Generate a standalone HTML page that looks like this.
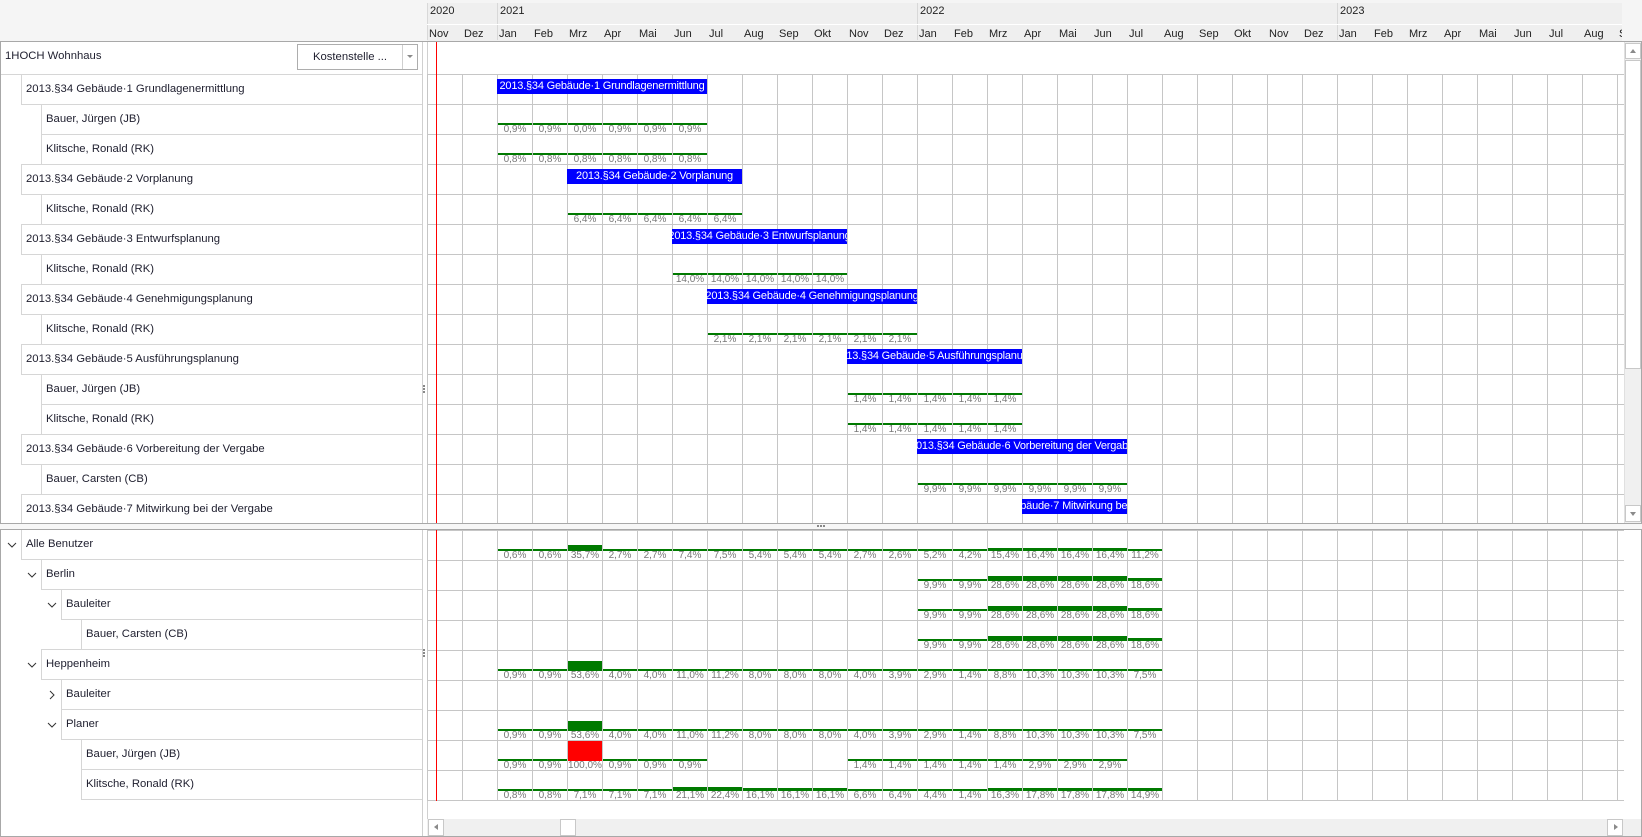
<!DOCTYPE html>
<html><head><meta charset="utf-8">
<style>
*{margin:0;padding:0;box-sizing:border-box}
body{width:1642px;height:837px;background:#fff;position:relative;overflow:hidden;font-family:"Liberation Sans",sans-serif;color:#1e1e2e}
.a{position:absolute}
.hdr{left:0;top:0;width:1642px;height:41px;background:#f5f5f5}
.hchart{left:427px;top:3px;width:1195px;height:38px;background:#efefef;overflow:hidden}
.yr{position:absolute;top:0;height:37px;border-left:1px solid #d8d8d8;font-size:11px;padding:2px 0 0 2px;color:#222}
.mrow{position:absolute;left:0;top:21px;height:16px;border-top:1px solid #fff;display:flex;width:1300px}
.mrow span{width:35px;flex:none;font-size:11px;padding:3px 0 0 2px;color:#222}
.panel{border:1px solid #a8a8a8}
.grid{background-image:repeating-linear-gradient(to right,#c6c6c6 0 1px,transparent 1px 35px),repeating-linear-gradient(to bottom,#c6c6c6 0 1px,transparent 1px 30px)}
.t{position:absolute;height:31px;border-top:1px solid #d6d6d6;border-bottom:1px solid #d6d6d6;border-left:1px solid #d6d6d6;font-size:11.3px;line-height:29px;padding-left:4px;white-space:nowrap;color:#1e1e2e}
.chev{position:absolute;width:10px;height:10px}
.bar{position:absolute;height:15px;background:#0000ff;color:#fff;font-size:11px;letter-spacing:-0.2px;line-height:15px;white-space:nowrap;overflow:hidden;display:flex;justify-content:center}
.bar span{flex:none}
.r{position:absolute;display:flex;height:29px;align-items:flex-end}
.r s{text-decoration:none;display:block;flex:none;box-sizing:content-box;width:34px;margin-right:1px;border-top:2px solid #007a00;height:9px;line-height:9px;font-size:10px;color:#777;text-align:center}
.r s.red{border-top:20px solid #ff0000}
.red-line{position:absolute;left:436px;width:1px;background:#ff0000}
</style></head><body>
<div class="a hdr"></div>
<div class="a hchart">
 <div class="yr" style="left:0;width:70px">2020</div>
 <div class="yr" style="left:70px;width:420px">2021</div>
 <div class="yr" style="left:490px;width:420px">2022</div>
 <div class="yr" style="left:910px;width:420px">2023</div>
 <div class="mrow"><span>Nov</span><span>Dez</span><span>Jan</span><span>Feb</span><span>Mrz</span><span>Apr</span><span>Mai</span><span>Jun</span><span>Jul</span><span>Aug</span><span>Sep</span><span>Okt</span><span>Nov</span><span>Dez</span><span>Jan</span><span>Feb</span><span>Mrz</span><span>Apr</span><span>Mai</span><span>Jun</span><span>Jul</span><span>Aug</span><span>Sep</span><span>Okt</span><span>Nov</span><span>Dez</span><span>Jan</span><span>Feb</span><span>Mrz</span><span>Apr</span><span>Mai</span><span>Jun</span><span>Jul</span><span>Aug</span><span>S</span></div>
</div>

<div class="a panel" style="left:0;top:41px;width:1642px;height:483px;overflow:hidden">
 <div class="a" style="left:0;top:0;width:421px;height:481px;overflow:hidden">
  <div class="t" style="left:-1px;top:-1px;width:422px;height:34px;border-left:none;border-top:none;line-height:30px;padding-left:5px">1HOCH Wohnhaus</div>
  <div class="a" style="left:296px;top:2px;width:121px;height:26px;border:1px solid #adadad;background:#fff;font-size:11.3px;line-height:24px">
   <span style="position:absolute;left:0;width:104px;text-align:center">Kostenstelle ...</span>
   <span style="position:absolute;left:104px;top:0;width:1px;height:24px;background:#cfcfcf"></span>
   <span style="position:absolute;left:109px;top:10px;border-left:3px solid transparent;border-right:3px solid transparent;border-top:3px solid #8a8a8a"></span>
  </div>
  <div class="t" style="left:20px;top:32px;width:402px">2013.§34 Gebäude·1 Grundlagenermittlung</div>
  <div class="t" style="left:40px;top:62px;width:382px">Bauer, Jürgen (JB)</div>
  <div class="t" style="left:40px;top:92px;width:382px">Klitsche, Ronald (RK)</div>
  <div class="t" style="left:20px;top:122px;width:402px">2013.§34 Gebäude·2 Vorplanung</div>
  <div class="t" style="left:40px;top:152px;width:382px">Klitsche, Ronald (RK)</div>
  <div class="t" style="left:20px;top:182px;width:402px">2013.§34 Gebäude·3 Entwurfsplanung</div>
  <div class="t" style="left:40px;top:212px;width:382px">Klitsche, Ronald (RK)</div>
  <div class="t" style="left:20px;top:242px;width:402px">2013.§34 Gebäude·4 Genehmigungsplanung</div>
  <div class="t" style="left:40px;top:272px;width:382px">Klitsche, Ronald (RK)</div>
  <div class="t" style="left:20px;top:302px;width:402px">2013.§34 Gebäude·5 Ausführungsplanung</div>
  <div class="t" style="left:40px;top:332px;width:382px">Bauer, Jürgen (JB)</div>
  <div class="t" style="left:40px;top:362px;width:382px">Klitsche, Ronald (RK)</div>
  <div class="t" style="left:20px;top:392px;width:402px">2013.§34 Gebäude·6 Vorbereitung der Vergabe</div>
  <div class="t" style="left:40px;top:422px;width:382px">Bauer, Carsten (CB)</div>
  <div class="t" style="left:20px;top:452px;width:402px">2013.§34 Gebäude·7 Mitwirkung bei der Vergabe</div>
 </div>
 <div class="a" style="left:421px;top:0;width:1px;height:481px;background:#d0d0d0"></div>
 <div class="a" style="left:422px;top:343px;width:2px;height:2px;background:#888;box-shadow:0 3px 0 #888,0 6px 0 #888"></div>
 <div class="a" style="left:426px;top:0;width:1px;height:481px;background:#d0d0d0"></div>
 <div class="a grid" style="left:426px;top:32px;width:1197px;height:460px"></div>
 <div class="red-line" style="left:435px;top:0;height:481px"></div>
 <div class="bar" style="left:496px;top:37px;width:210px"><span>2013.§34 Gebäude·1 Grundlagenermittlung</span></div>
 <div class="r" style="left:497px;top:63px"><s>0,9%</s><s>0,9%</s><s>0,0%</s><s>0,9%</s><s>0,9%</s><s>0,9%</s></div>
 <div class="r" style="left:497px;top:93px"><s>0,8%</s><s>0,8%</s><s>0,8%</s><s>0,8%</s><s>0,8%</s><s>0,8%</s></div>
 <div class="bar" style="left:566px;top:127px;width:175px"><span>2013.§34 Gebäude·2 Vorplanung</span></div>
 <div class="r" style="left:567px;top:153px"><s>6,4%</s><s>6,4%</s><s>6,4%</s><s>6,4%</s><s>6,4%</s></div>
 <div class="bar" style="left:671px;top:187px;width:175px"><span>2013.§34 Gebäude·3 Entwurfsplanung</span></div>
 <div class="r" style="left:672px;top:213px"><s>14,0%</s><s>14,0%</s><s>14,0%</s><s>14,0%</s><s>14,0%</s></div>
 <div class="bar" style="left:706px;top:247px;width:210px"><span>2013.§34 Gebäude·4 Genehmigungsplanung</span></div>
 <div class="r" style="left:707px;top:273px"><s>2,1%</s><s>2,1%</s><s>2,1%</s><s>2,1%</s><s>2,1%</s><s>2,1%</s></div>
 <div class="bar" style="left:846px;top:307px;width:175px"><span>2013.§34 Gebäude·5 Ausführungsplanung</span></div>
 <div class="r" style="left:847px;top:333px"><s>1,4%</s><s>1,4%</s><s>1,4%</s><s>1,4%</s><s>1,4%</s></div>
 <div class="r" style="left:847px;top:363px"><s>1,4%</s><s>1,4%</s><s>1,4%</s><s>1,4%</s><s>1,4%</s></div>
 <div class="bar" style="left:916px;top:397px;width:210px"><span>2013.§34 Gebäude·6 Vorbereitung der Vergabe</span></div>
 <div class="r" style="left:917px;top:423px"><s>9,9%</s><s>9,9%</s><s>9,9%</s><s>9,9%</s><s>9,9%</s><s>9,9%</s></div>
 <div class="bar" style="left:1021px;top:457px;width:105px"><span>2013.§34 Gebäude·7 Mitwirkung bei der Vergabe</span></div>
 <div class="a" style="left:1623px;top:0;width:17px;height:481px;background:#f0f0f0;border-left:1px solid #e0e0e0"></div>
 <div class="a" style="left:1624px;top:1px;width:16px;height:16px;background:#fff;border:1px solid #c8c8c8"><span style="position:absolute;left:4px;top:5px;border-left:3px solid transparent;border-right:3px solid transparent;border-bottom:4px solid #8a8a8a"></span></div>
 <div class="a" style="left:1624px;top:18px;width:16px;height:309px;background:#fff;border:1px solid #c8c8c8"></div>
 <div class="a" style="left:1624px;top:463px;width:16px;height:17px;background:#fff;border:1px solid #c8c8c8"><span style="position:absolute;left:4px;top:6px;border-left:3px solid transparent;border-right:3px solid transparent;border-top:4px solid #8a8a8a"></span></div>
</div>

<div class="a" style="left:0;top:524px;width:1642px;height:6px;background:#f7f7f7"></div>
<div class="a" style="left:817px;top:525px;width:2px;height:2px;background:#888;box-shadow:3px 0 0 #888,6px 0 0 #888"></div>

<div class="a panel" style="left:0;top:529px;width:1642px;height:308px;overflow:hidden">
 <div class="a" style="left:0;top:0;width:421px;height:306px;overflow:hidden">
  <svg class="chev" style="left:6px;top:10px" viewBox="0 0 10 10"><polyline points="1,3 5,7 9,3" fill="none" stroke="#333" stroke-width="1"/></svg>
  <div class="t" style="left:20px;top:-1px;width:402px">Alle Benutzer</div>
  <svg class="chev" style="left:26px;top:40px" viewBox="0 0 10 10"><polyline points="1,3 5,7 9,3" fill="none" stroke="#333" stroke-width="1"/></svg>
  <div class="t" style="left:40px;top:29px;width:382px">Berlin</div>
  <svg class="chev" style="left:46px;top:70px" viewBox="0 0 10 10"><polyline points="1,3 5,7 9,3" fill="none" stroke="#333" stroke-width="1"/></svg>
  <div class="t" style="left:60px;top:59px;width:362px">Bauleiter</div>
  <div class="t" style="left:80px;top:89px;width:342px">Bauer, Carsten (CB)</div>
  <svg class="chev" style="left:26px;top:130px" viewBox="0 0 10 10"><polyline points="1,3 5,7 9,3" fill="none" stroke="#333" stroke-width="1"/></svg>
  <div class="t" style="left:40px;top:119px;width:382px">Heppenheim</div>
  <svg class="chev" style="left:46px;top:160px" viewBox="0 0 10 10"><polyline points="3,1 7,5 3,9" fill="none" stroke="#333" stroke-width="1"/></svg>
  <div class="t" style="left:60px;top:149px;width:362px">Bauleiter</div>
  <svg class="chev" style="left:46px;top:190px" viewBox="0 0 10 10"><polyline points="1,3 5,7 9,3" fill="none" stroke="#333" stroke-width="1"/></svg>
  <div class="t" style="left:60px;top:179px;width:362px">Planer</div>
  <div class="t" style="left:80px;top:209px;width:342px">Bauer, Jürgen (JB)</div>
  <div class="t" style="left:80px;top:239px;width:342px">Klitsche, Ronald (RK)</div>
 </div>
 <div class="a" style="left:421px;top:0;width:1px;height:306px;background:#d0d0d0"></div>
 <div class="a" style="left:422px;top:119px;width:2px;height:2px;background:#888;box-shadow:0 3px 0 #888,0 6px 0 #888"></div>
 <div class="a" style="left:426px;top:0;width:1px;height:306px;background:#d0d0d0"></div>
 <div class="a grid" style="left:426px;top:0;width:1197px;height:271px"></div>
 <div class="red-line" style="left:435px;top:0;height:271px"></div>
 <div class="r" style="left:497px;top:1px"><s>0,6%</s><s>0,6%</s><s style="border-top-width:6px">35,7%</s><s>2,7%</s><s>2,7%</s><s>7,4%</s><s>7,5%</s><s>5,4%</s><s>5,4%</s><s>5,4%</s><s>2,7%</s><s>2,6%</s><s>5,2%</s><s>4,2%</s><s style="border-top-width:3px">15,4%</s><s style="border-top-width:3px">16,4%</s><s style="border-top-width:3px">16,4%</s><s style="border-top-width:3px">16,4%</s><s>11,2%</s></div>
 <div class="r" style="left:917px;top:31px"><s>9,9%</s><s>9,9%</s><s style="border-top-width:5px">28,6%</s><s style="border-top-width:5px">28,6%</s><s style="border-top-width:5px">28,6%</s><s style="border-top-width:5px">28,6%</s><s style="border-top-width:3px">18,6%</s></div>
 <div class="r" style="left:917px;top:61px"><s>9,9%</s><s>9,9%</s><s style="border-top-width:5px">28,6%</s><s style="border-top-width:5px">28,6%</s><s style="border-top-width:5px">28,6%</s><s style="border-top-width:5px">28,6%</s><s style="border-top-width:3px">18,6%</s></div>
 <div class="r" style="left:917px;top:91px"><s>9,9%</s><s>9,9%</s><s style="border-top-width:5px">28,6%</s><s style="border-top-width:5px">28,6%</s><s style="border-top-width:5px">28,6%</s><s style="border-top-width:5px">28,6%</s><s style="border-top-width:3px">18,6%</s></div>
 <div class="r" style="left:497px;top:121px"><s>0,9%</s><s>0,9%</s><s style="border-top-width:10px">53,6%</s><s>4,0%</s><s>4,0%</s><s>11,0%</s><s>11,2%</s><s>8,0%</s><s>8,0%</s><s>8,0%</s><s>4,0%</s><s>3,9%</s><s>2,9%</s><s>1,4%</s><s>8,8%</s><s>10,3%</s><s>10,3%</s><s>10,3%</s><s>7,5%</s></div>
 <div class="r" style="left:497px;top:181px"><s>0,9%</s><s>0,9%</s><s style="border-top-width:10px">53,6%</s><s>4,0%</s><s>4,0%</s><s>11,0%</s><s>11,2%</s><s>8,0%</s><s>8,0%</s><s>8,0%</s><s>4,0%</s><s>3,9%</s><s>2,9%</s><s>1,4%</s><s>8,8%</s><s>10,3%</s><s>10,3%</s><s>10,3%</s><s>7,5%</s></div>
 <div class="r" style="left:497px;top:211px"><s>0,9%</s><s>0,9%</s><s class="red">100,0%</s><s>0,9%</s><s>0,9%</s><s>0,9%</s></div>
 <div class="r" style="left:847px;top:211px"><s>1,4%</s><s>1,4%</s><s>1,4%</s><s>1,4%</s><s>1,4%</s><s>2,9%</s><s>2,9%</s><s>2,9%</s></div>
 <div class="r" style="left:497px;top:241px"><s>0,8%</s><s>0,8%</s><s>7,1%</s><s>7,1%</s><s>7,1%</s><s style="border-top-width:4px">21,1%</s><s style="border-top-width:4px">22,4%</s><s style="border-top-width:3px">16,1%</s><s style="border-top-width:3px">16,1%</s><s style="border-top-width:3px">16,1%</s><s>6,6%</s><s>6,4%</s><s>4,4%</s><s>1,4%</s><s style="border-top-width:3px">16,3%</s><s style="border-top-width:3px">17,8%</s><s style="border-top-width:3px">17,8%</s><s style="border-top-width:3px">17,8%</s><s style="border-top-width:3px">14,9%</s></div>
 <div class="a" style="left:426px;top:289px;width:1214px;height:17px;background:#f0f0f0"></div>
 <div class="a" style="left:427px;top:289px;width:16px;height:17px;background:#fff;border:1px solid #c8c8c8"><span style="position:absolute;left:5px;top:4px;border-top:3px solid transparent;border-bottom:3px solid transparent;border-right:4px solid #8a8a8a"></span></div>
 <div class="a" style="left:559px;top:289px;width:16px;height:17px;background:#fff;border:1px solid #c8c8c8"></div>
 <div class="a" style="left:1606px;top:289px;width:16px;height:17px;background:#fff;border:1px solid #c8c8c8"><span style="position:absolute;left:6px;top:4px;border-top:3px solid transparent;border-bottom:3px solid transparent;border-left:4px solid #8a8a8a"></span></div>
</div>
</body></html>
